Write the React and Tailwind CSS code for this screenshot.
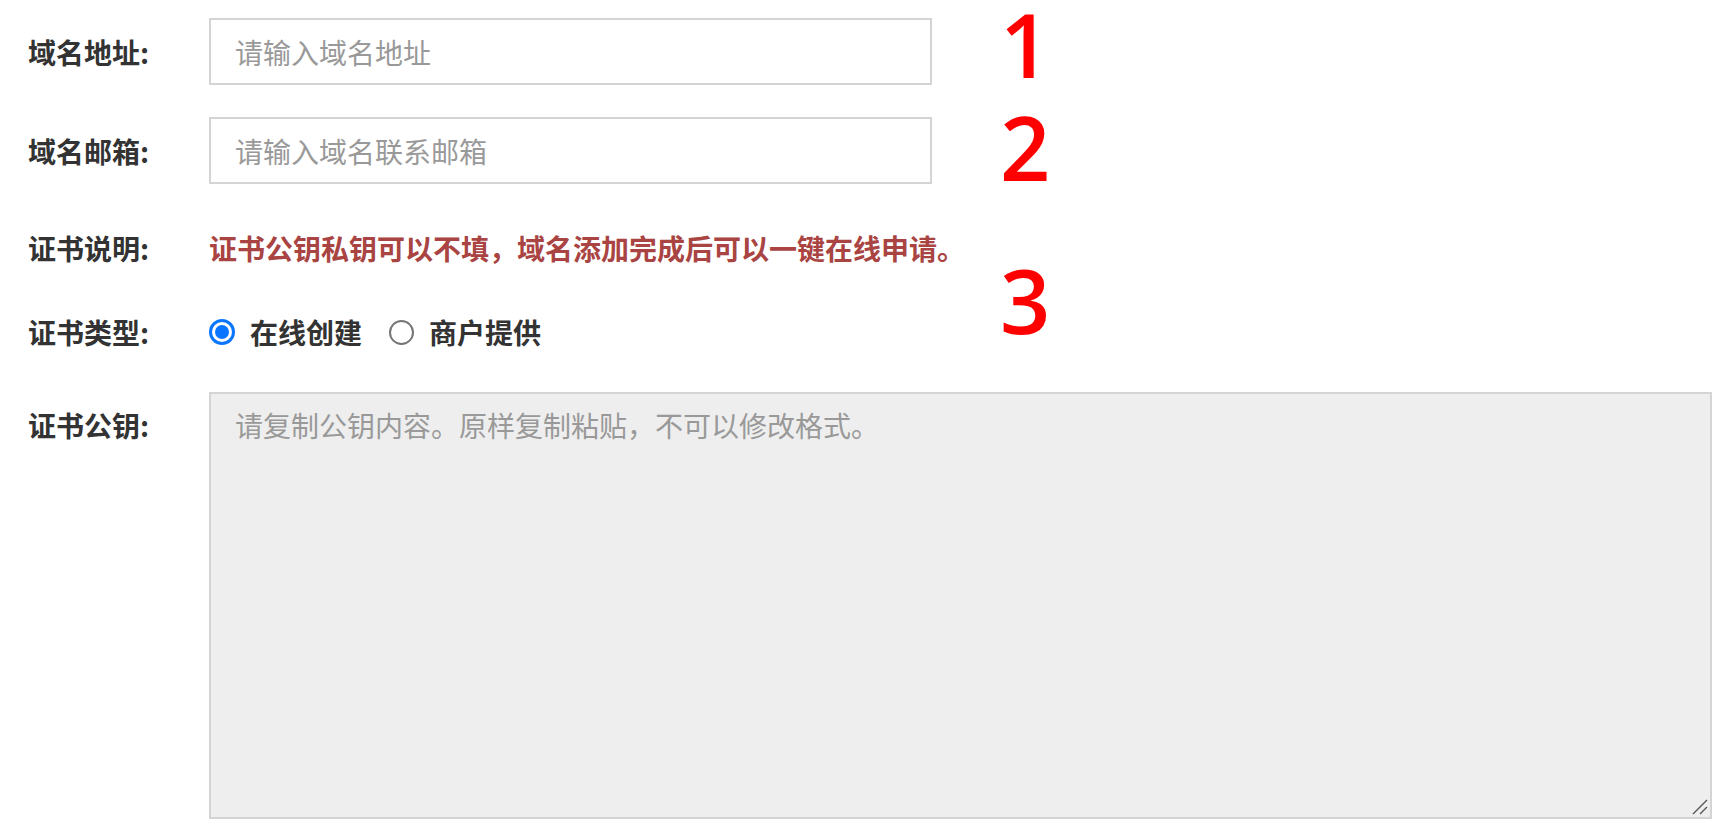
import { useState } from "react";

const font = { fontFamily: '"Noto Sans CJK SC", "Noto Sans", sans-serif' };
const markFont = { fontFamily: '"Open Sans", "Noto Sans", sans-serif' };

const Label = ({ children, className = "" }) => (
  <div className={`w-[181px] shrink-0 text-[28px] leading-[42px] font-bold text-[#333] ${className}`}>
    {children}
  </div>
);

const Radio = ({ checked, label, onClick }) => (
  <button type="button" onClick={onClick} className="flex items-center gap-[15px]">
    {checked ? (
      <span className="flex h-[26px] w-[26px] items-center justify-center rounded-full border-[3px] border-[#0a75ff] bg-white">
        <span className="h-[14px] w-[14px] rounded-full bg-[#0a75ff]" />
      </span>
    ) : (
      <span className="h-[25px] w-[25px] rounded-full border-2 border-[#767676] bg-white" />
    )}
    <span className="text-[28px] leading-[42px] font-bold text-[#333]">{label}</span>
  </button>
);

export default function App() {
  const [type, setType] = useState("online");

  return (
    <div className="relative min-h-screen bg-white pt-[18px] pl-[28px] pr-[8px]" style={font}>
      <div className="flex items-center">
        <Label>域名地址:</Label>
        <input
          placeholder="请输入域名地址"
          className="h-[67px] w-[723px] border-2 border-[#d4d4d4] bg-white px-[24px] text-[28px] text-[#555] placeholder:text-[#999] outline-none"
        />
      </div>

      <div className="mt-[32px] flex items-center">
        <Label>域名邮箱:</Label>
        <input
          placeholder="请输入域名联系邮箱"
          className="h-[67px] w-[723px] border-2 border-[#d4d4d4] bg-white px-[24px] text-[28px] text-[#555] placeholder:text-[#999] outline-none"
        />
      </div>

      <div className="mt-[43px] flex items-center">
        <Label>证书说明:</Label>
        <p className="text-[28px] leading-[42px] font-bold text-[#a94442]">
          证书公钥私钥可以不填，域名添加完成后可以一键在线申请。
        </p>
      </div>

      <div className="mt-[42px] flex items-center">
        <Label>证书类型:</Label>
        <div className="flex items-center gap-[27px]">
          <Radio checked={type === "online"} label="在线创建" onClick={() => setType("online")} />
          <Radio checked={type === "merchant"} label="商户提供" onClick={() => setType("merchant")} />
        </div>
      </div>

      <div className="mt-[39px] flex items-start">
        <Label className="pt-[12px]">证书公钥:</Label>
        <div className="relative flex-1">
          <textarea
            readOnly
            placeholder="请复制公钥内容。原样复制粘贴，不可以修改格式。"
            className="block h-[427px] w-full resize-none border-2 border-[#d4d4d4] bg-[#eeeeee] px-[24px] py-[10px] text-[28px] leading-[42px] text-[#555] placeholder:text-[#999] outline-none"
          />
          <svg className="absolute bottom-[3px] right-[3px]" width="18" height="18" viewBox="0 0 18 18">
            <path d="M2 16 L16 2 M9 16 L16 9" stroke="#555" strokeWidth="1.4" fill="none" />
          </svg>
        </div>
      </div>

      <span className="absolute left-[1000px] top-[0px] text-[88px] leading-none font-semibold text-[#ff0000]" style={markFont}>
        1
      </span>
      <span className="absolute left-[1000px] top-[103px] text-[88px] leading-none font-semibold text-[#ff0000]" style={markFont}>
        2
      </span>
      <span className="absolute left-[1000px] top-[256px] text-[88px] leading-none font-semibold text-[#ff0000]" style={markFont}>
        3
      </span>
    </div>
  );
}
